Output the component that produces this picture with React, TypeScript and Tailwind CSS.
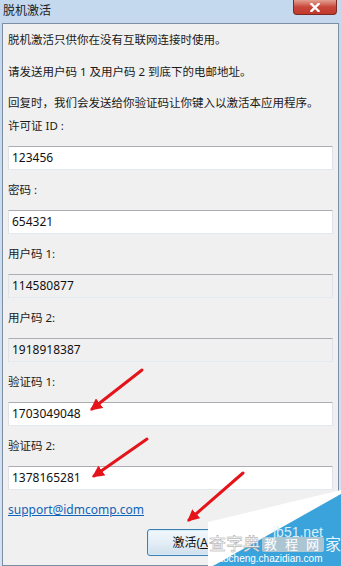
const cjk = "font-['Noto_Sans','Noto_Sans_CJK_SC',sans-serif]";

type Field = { label: string; value: string; disabled?: boolean };

const fields: Field[] = [
  { label: "许可证 ID :", value: "123456" },
  { label: "密码 :", value: "654321" },
  { label: "用户码 1:", value: "114580877", disabled: true },
  { label: "用户码 2:", value: "1918918387", disabled: true },
  { label: "验证码 1:", value: "1703049048" },
  { label: "验证码 2:", value: "1378165281" },
];

function FieldRow({ label, value, disabled }: Field) {
  return (
    <div className="flex flex-col">
      <div className="mt-[7px] h-[16px] leading-[16px] text-[11.5px] text-[#1a1a1a]">{label}</div>
      <div
        className={`mt-[12px] h-[24px] w-[325px] border border-t-[#abadb3] border-x-[#dfe3e8] border-b-[#e3e9ef] pl-[3px] flex items-center text-[12px] text-[#111] ${
          disabled ? "bg-[#f0f0f0]" : "bg-white"
        }`}
      >
        {value}
      </div>
      <div className="h-[5px]" />
    </div>
  );
}

// red annotation arrows + the site watermark in the corner
function Overlay() {
  return (
    <svg className="absolute inset-0 pointer-events-none" width="341" height="566" viewBox="0 0 341 566">
      <defs>
        <marker id="head" viewBox="0 0 10 10" refX="8" refY="5" markerWidth="4" markerHeight="4" orient="auto">
          <path d="M0 0 L10 5 L0 10 z" fill="#e5141b" />
        </marker>
      </defs>
      <g stroke="#e5141b" strokeWidth="3" strokeLinecap="round" markerEnd="url(#head)">
        <line x1="142" y1="370" x2="92" y2="409" />
        <line x1="147" y1="439" x2="94" y2="476" />
        <line x1="243" y1="473" x2="189" y2="520" />
      </g>
      <polygon points="341,490 208,522 208,566 213,566 341,494" fill="#ffffff" />
      <polygon points="341,494 341,566 213,566" fill="#3aa3dc" />
      <rect x="262" y="537" width="62" height="15" rx="2" fill="#c9cdd1" opacity="0.8" />
      <text x="273" y="537" fill="#d8eefa" fontSize="14" fontFamily="Liberation Sans, sans-serif">jb51.net</text>
      <text x="209" y="550" fill="#ffffff" stroke="#9a9a9a" strokeWidth="0.4" fontSize="17" fontFamily="Noto Sans CJK SC, sans-serif">查字典</text>
      <text x="264" y="549" fill="#ffffff" fontSize="13" fontFamily="Noto Sans CJK SC, sans-serif" letterSpacing="8">教程网</text>
      <text x="325" y="550" fill="#e8f4fb" fontSize="16" fontFamily="Noto Sans CJK SC, sans-serif">家</text>
      <text x="213" y="562" fill="#ffffff" fontSize="10" fontFamily="Liberation Sans, sans-serif">jiaocheng.chazidian.com</text>
    </svg>
  );
}

export default function App() {
  return (
    <div className={`relative w-[341px] h-[566px] overflow-hidden bg-gradient-to-b from-[#c4d8ee] to-[#d4e3f3] ${cjk}`}>
      {/* title bar */}
      <div className="h-[23px] flex items-start justify-between">
        <div className="pl-[3px] pt-[2px] text-[12px] leading-[18px] text-[#222]">脱机激活</div>
        <div className="mr-[4px] w-[44px] h-[15px] rounded-b-[4px] border border-t-0 border-[#7a2a22] bg-gradient-to-b from-[#e2a092] via-[#c8463a] to-[#c13a2c] flex items-center justify-center">
          <svg width="10" height="9" viewBox="0 0 10 9">
            <path d="M1.5 1 L8.5 8 M8.5 1 L1.5 8" stroke="#fff" strokeWidth="2.4" strokeLinecap="square" />
          </svg>
        </div>
      </div>

      {/* content */}
      <div className="mx-[2px] h-[543px] border border-[#7d8ea3] bg-[#f0f0f0] pl-[5px] pr-[4px] flex flex-col text-[#1a1a1a]">
        <div className="mt-[8px] h-[16px] leading-[16px] text-[11.5px]">脱机激活只供你在没有互联网连接时使用。</div>
        <div className="mt-[16px] h-[16px] leading-[16px] text-[11.5px]">请发送用户码 1 及用户码 2 到底下的电邮地址。</div>
        <div className="mt-[15px] h-[16px] leading-[16px] text-[11.5px]">回复时，我们会发送给你验证码让你键入以激活本应用程序。</div>

        {fields.map((f) => (
          <FieldRow key={f.label} {...f} />
        ))}

        <div className="mt-[7px] h-[16px] leading-[16px] text-[12px]">
          <a className="text-[#0f63b8] underline">support@idmcomp.com</a>
        </div>

        <div className="mt-[11px] flex">
          <button className="ml-[139px] w-[90px] h-[27px] rounded-[3px] border border-[#3c7fb1] bg-gradient-to-b from-[#f2f8fc] via-[#e4eef6] to-[#cfdfeb] text-[12px] text-[#111] shadow-[inset_0_0_0_1px_#d6ecfa]">
            激活(<span className="underline">A</span>)
          </button>
        </div>
      </div>

      <Overlay />
    </div>
  );
}
